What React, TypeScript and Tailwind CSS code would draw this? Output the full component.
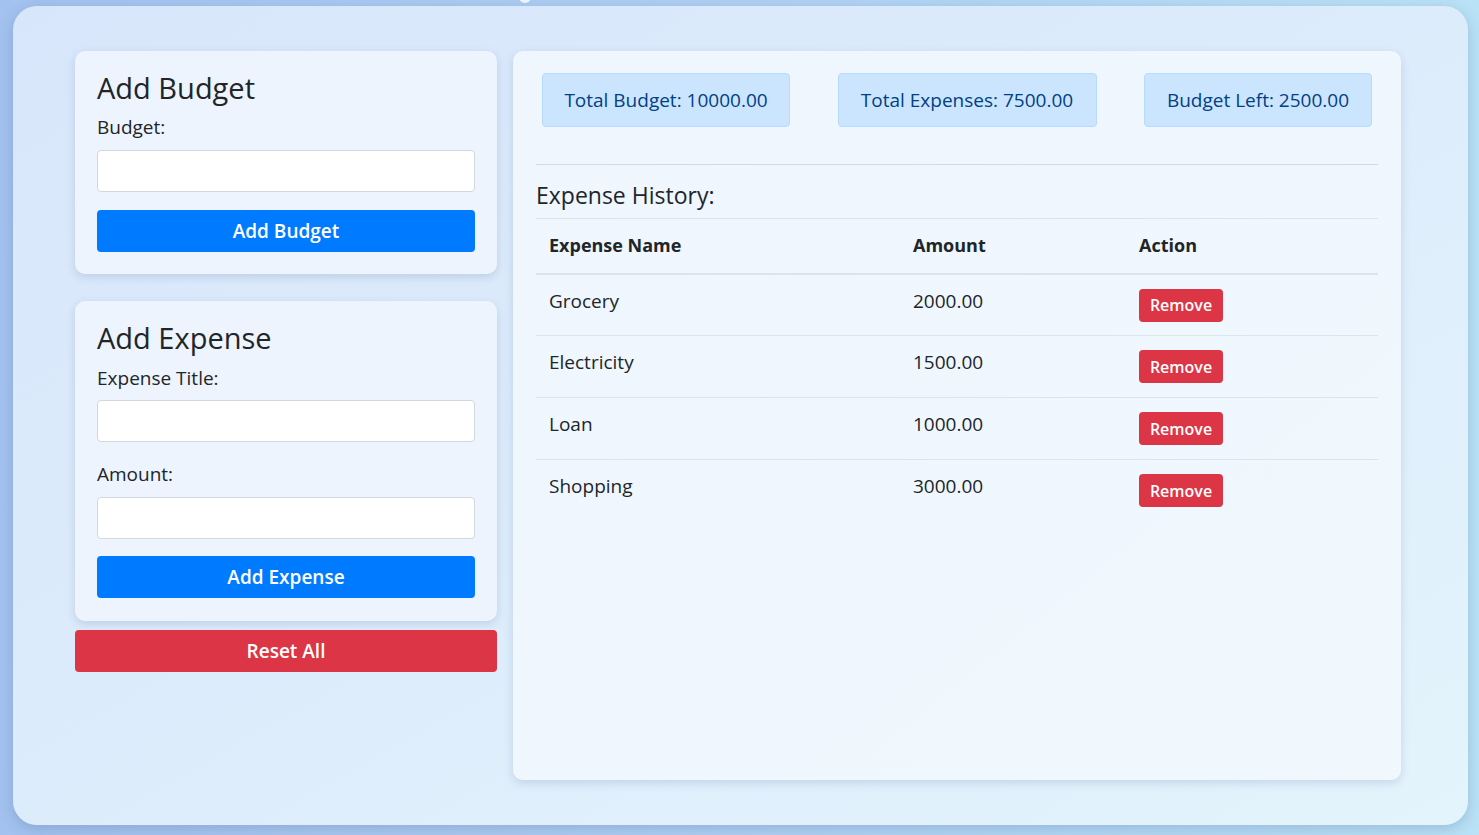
import React, { useState } from 'react';

type Expense = { id: number; name: string; amount: number };

const INITIAL: Expense[] = [
  { id: 1, name: 'Grocery', amount: 2000 },
  { id: 2, name: 'Electricity', amount: 1500 },
  { id: 3, name: 'Loan', amount: 1000 },
  { id: 4, name: 'Shopping', amount: 3000 },
];

function App() {
  const [budget, setBudget] = useState(10000);
  const [expenses, setExpenses] = useState<Expense[]>(INITIAL);
  const [budgetInput, setBudgetInput] = useState('');
  const [title, setTitle] = useState('');
  const [amount, setAmount] = useState('');

  const totalExpenses = expenses.reduce((sum, e) => sum + e.amount, 0);

  const addBudget = () => {
    const value = parseFloat(budgetInput);
    if (!isNaN(value)) setBudget(budget + value);
    setBudgetInput('');
  };

  const addExpense = () => {
    const value = parseFloat(amount);
    if (!title.trim() || isNaN(value)) return;
    setExpenses([...expenses, { id: Date.now(), name: title, amount: value }]);
    setTitle('');
    setAmount('');
  };

  const resetAll = () => {
    setBudget(0);
    setExpenses([]);
  };

  return (
    <div
      className="relative min-h-screen bg-gradient-to-r from-[#a3c2ef] via-[#b0d0f3] to-[#bae2f6] pt-[6px] pb-[10px] pl-[13px] pr-[11px] text-[#212529]"
      style={{ fontFamily: '"Open Sans", "Noto Sans", sans-serif' }}
    >
      {/* bit of something peeking at the very top */}
      <div className="absolute left-[519px] top-[-9px] h-[12px] w-[12px] rounded-full bg-white/80" />

      <div className="flex h-[819px] gap-4 rounded-[24px] bg-gradient-to-br from-[#d8e6fb] via-[#ddecfb] to-[#e4f4fc] pl-[62px] pt-[45px] shadow-[0_4px_14px_rgba(60,90,140,0.25)]">
        {/* Left column */}
        <div className="w-[422px] shrink-0">
          <div className="rounded-[10px] bg-[#edf4fe] px-[22px] pt-[20px] pb-[22px] shadow-[0_3px_10px_rgba(70,100,150,0.2)]">
            <h3 className="text-[29px] leading-[34px] font-normal">Add Budget</h3>
            <label className="mt-[10px] block text-[19px] leading-[24px]">Budget:</label>
            <input
              value={budgetInput}
              onChange={(e) => setBudgetInput(e.target.value)}
              className="mt-[11px] block h-[42px] w-full rounded-[4px] border border-[#d3d8de] bg-white px-3 outline-none"
            />
            <button
              onClick={addBudget}
              className="mt-[18px] block h-[42px] w-full rounded-[4px] bg-[#007bff] text-[19px] font-semibold text-white"
            >
              Add Budget
            </button>
          </div>

          <div className="mt-[27px] rounded-[10px] bg-[#edf4fe] px-[22px] pt-[20px] pb-[23px] shadow-[0_3px_10px_rgba(70,100,150,0.2)]">
            <h3 className="text-[29px] leading-[34px] font-normal">Add Expense</h3>
            <label className="mt-[11px] block text-[19px] leading-[24px]">Expense Title:</label>
            <input
              value={title}
              onChange={(e) => setTitle(e.target.value)}
              className="mt-[10px] block h-[42px] w-full rounded-[4px] border border-[#d3d8de] bg-white px-3 outline-none"
            />
            <label className="mt-[20px] block text-[19px] leading-[24px]">Amount:</label>
            <input
              value={amount}
              onChange={(e) => setAmount(e.target.value)}
              className="mt-[11px] block h-[42px] w-full rounded-[4px] border border-[#d3d8de] bg-white px-3 outline-none"
            />
            <button
              onClick={addExpense}
              className="mt-[17px] block h-[42px] w-full rounded-[4px] bg-[#007bff] text-[19px] font-semibold text-white"
            >
              Add Expense
            </button>
          </div>

          <button
            onClick={resetAll}
            className="mt-[9px] block h-[42px] w-full rounded-[4px] bg-[#dc3545] text-[19px] font-semibold text-white"
          >
            Reset All
          </button>
        </div>

        {/* Right panel */}
        <div className="h-[729px] w-[888px] shrink-0 rounded-[10px] bg-gradient-to-br from-[#eff6fe] to-[#f0f8fe] px-[23px] pt-[22px] shadow-[0_3px_10px_rgba(70,100,150,0.2)]">
          <div className="mx-[6px] flex justify-between">
            <div className="flex h-[54px] w-[248px] items-center justify-center rounded-[4px] border border-[#b8daff] bg-[#cce5ff] text-[19px] text-[#004085]">
              Total Budget: {budget.toFixed(2)}
            </div>
            <div className="flex h-[54px] w-[259px] items-center justify-center rounded-[4px] border border-[#b8daff] bg-[#cce5ff] text-[19px] text-[#004085]">
              Total Expenses: {totalExpenses.toFixed(2)}
            </div>
            <div className="flex h-[54px] w-[228px] items-center justify-center rounded-[4px] border border-[#b8daff] bg-[#cce5ff] text-[19px] text-[#004085]">
              Budget Left: {(budget - totalExpenses).toFixed(2)}
            </div>
          </div>

          <div className="mt-[37px] border-t border-[#d4dbe4]" />

          <h4 className="mt-[15px] text-[23px] leading-[30px] font-normal">Expense History:</h4>

          <table className="mt-[8px] w-full table-fixed border-collapse text-[19px]">
            <colgroup>
              <col className="w-[364px]" />
              <col className="w-[226px]" />
              <col />
            </colgroup>
            <thead>
              <tr className="h-[55px] border-t border-b-2 border-t-[#dde3ea] border-b-[#dde3ea]">
                <th className="px-[13px] text-left align-middle text-[18px] font-bold">Expense Name</th>
                <th className="px-[13px] text-left align-middle text-[18px] font-bold">Amount</th>
                <th className="px-[13px] text-left align-middle text-[18px] font-bold">Action</th>
              </tr>
            </thead>
            <tbody>
              {expenses.map((e, i) => (
                <tr key={e.id} className={`h-[62px] ${i > 0 ? 'border-t border-[#dde3ea]' : ''}`}>
                  <td className="px-[13px] pt-[14px] align-top leading-[24px]">{e.name}</td>
                  <td className="px-[13px] pt-[14px] align-top leading-[24px]">{e.amount.toFixed(2)}</td>
                  <td className="px-[13px] pt-[14px] align-top">
                    <button
                      onClick={() => setExpenses(expenses.filter((x) => x.id !== e.id))}
                      className="h-[33px] w-[84px] rounded-[4px] bg-[#dc3545] text-[16px] font-semibold text-white"
                    >
                      Remove
                    </button>
                  </td>
                </tr>
              ))}
            </tbody>
          </table>
        </div>
      </div>
    </div>
  );
}

export default App;
